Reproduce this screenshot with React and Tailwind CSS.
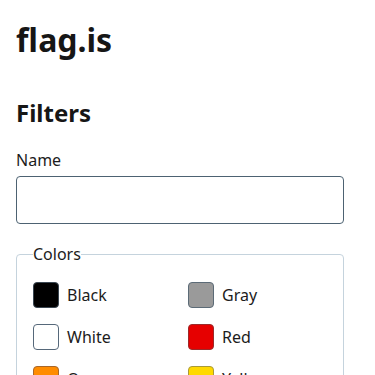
import React from "react";

const colors = [
  { name: "Black", fill: "bg-black", border: "border-[#3a4651]" },
  { name: "Gray", fill: "bg-[#9a9a9a]", border: "border-[#5c6b77]" },
  { name: "White", fill: "bg-white", border: "border-[#56687a]" },
  { name: "Red", fill: "bg-[#e60000]", border: "border-[#9c2a2a]" },
  { name: "Orange", fill: "bg-[#ff8c00]", border: "border-[#a8672a]" },
  { name: "Yellow", fill: "bg-[#ffd900]", border: "border-[#a89a3a]" },
  { name: "Green", fill: "bg-[#1f9e2f]", border: "border-[#2b6a35]" },
  { name: "Blue", fill: "bg-[#1a4fd6]", border: "border-[#2a3f80]" },
];

function App() {
  return (
    <div className="bg-white min-h-screen pl-4 pt-4 text-[#1c1c1c]" style={{ fontFamily: '"Noto Sans", sans-serif' }}>
      <div className="w-[328px]">
        <h1 className="text-[32px] font-bold leading-[48px] text-[#161616]">flag.is</h1>
        <h2 className="mt-[31px] text-2xl font-bold leading-9 text-[#161616]">Filters</h2>
        <label className="block mt-[17px] text-base leading-6">Name</label>
        <input className="mt-1 block w-full h-12 rounded border border-[#4d6272] bg-white px-3" type="text" />
        <fieldset className="mt-[18px] rounded border border-[#c5d3dd] px-4 pt-4 pb-4">
          <legend className="text-base leading-6">Colors</legend>
          <div className="grid grid-cols-2 gap-x-4 gap-y-4">
            {colors.map((c) => (
              <label key={c.name} className="flex items-center gap-2 h-[26px] text-base leading-6">
                <span className={`w-[26px] h-[26px] rounded border ${c.fill} ${c.border}`} />
                {c.name}
              </label>
            ))}
          </div>
        </fieldset>
      </div>
    </div>
  );
}

export default App;
